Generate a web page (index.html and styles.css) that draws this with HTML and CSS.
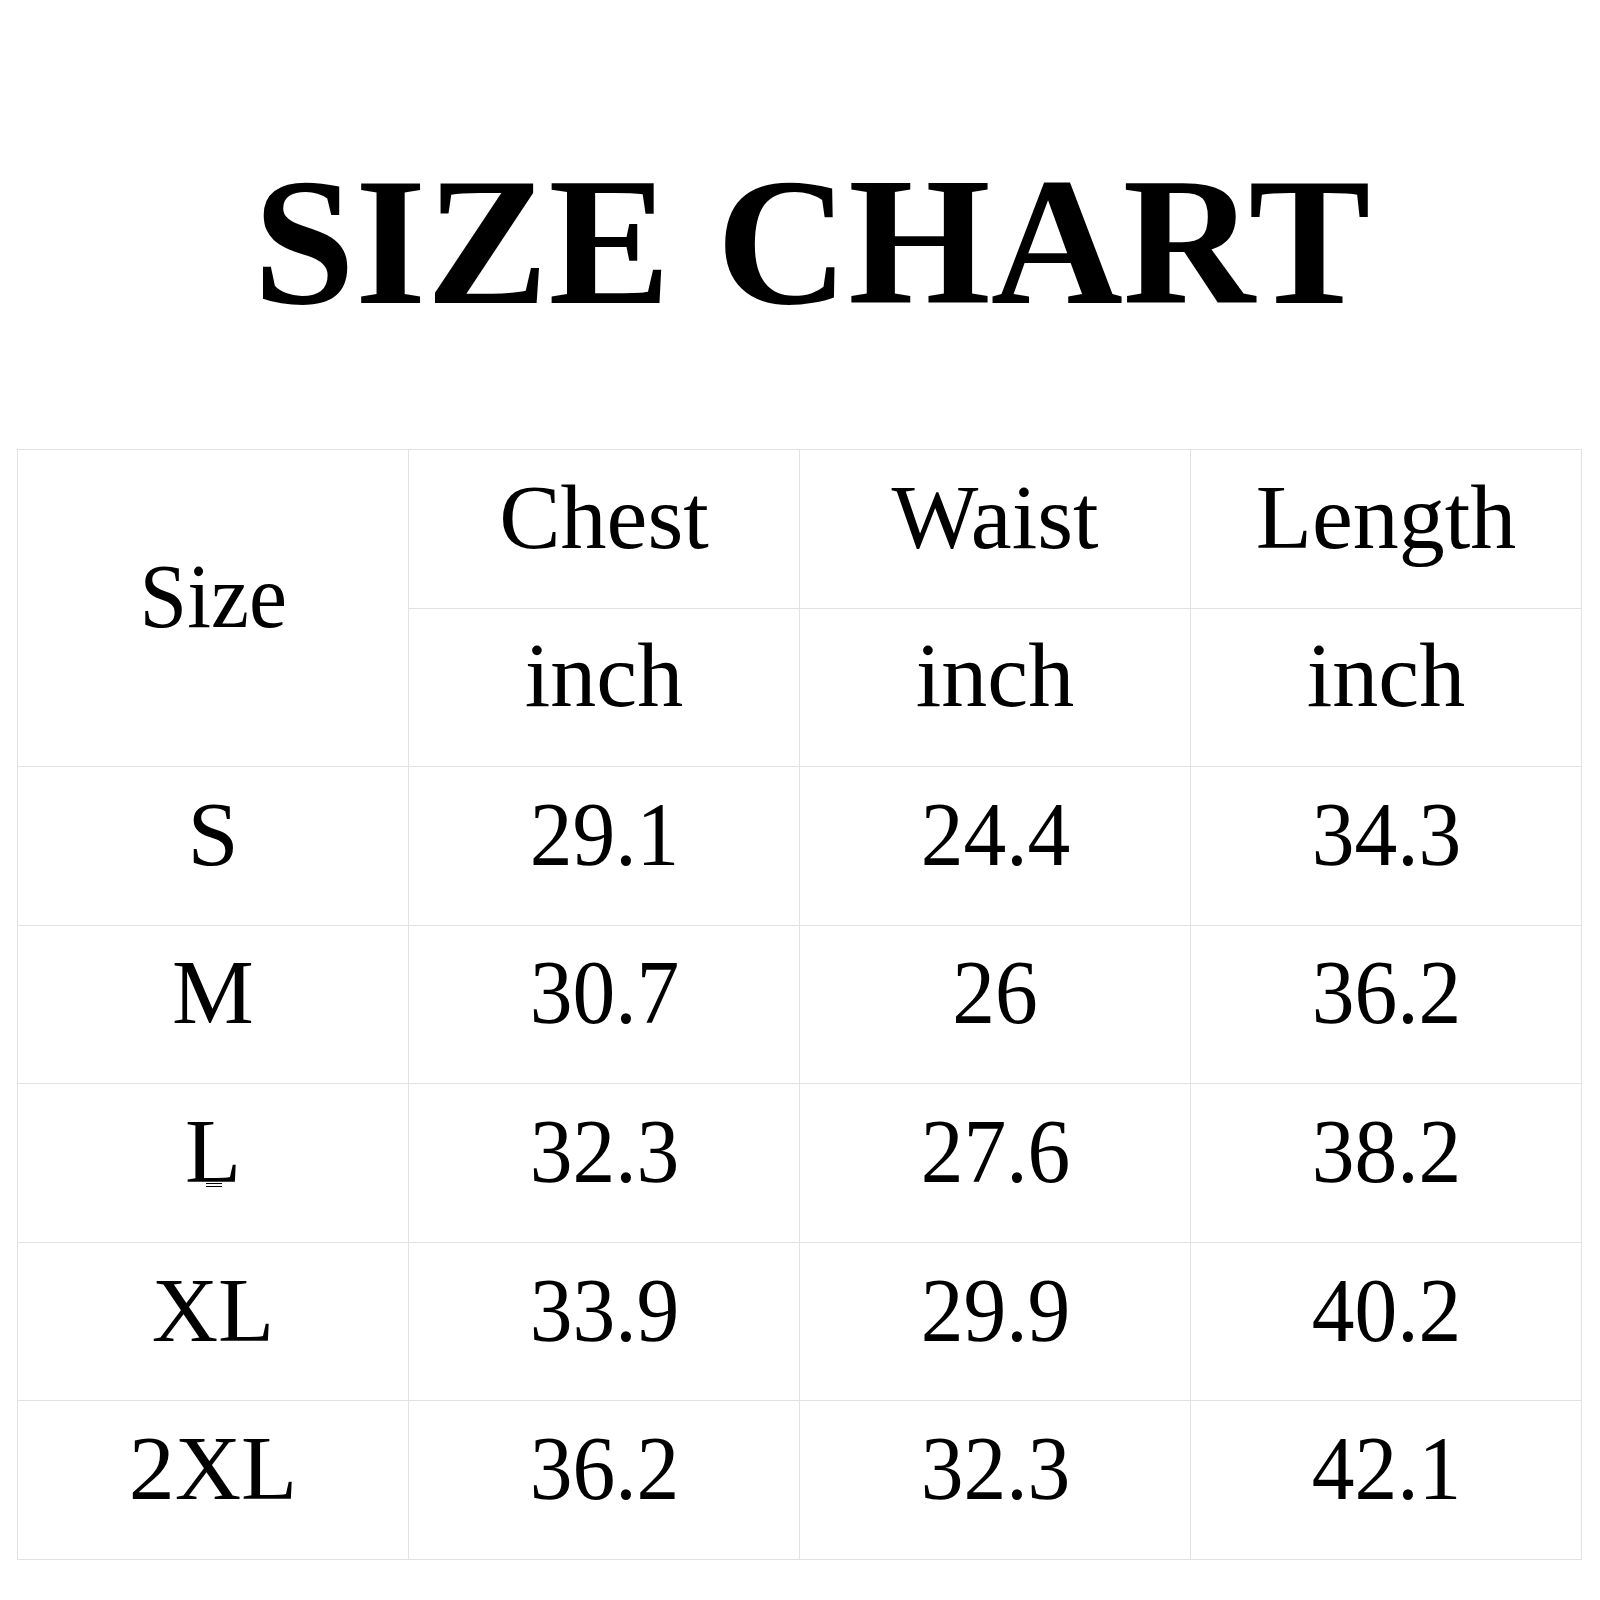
FILE: index.html
```html
<!DOCTYPE html>
<html lang="en">
<head>
<meta charset="utf-8">
<title>Size Chart</title>
<link rel="stylesheet" href="styles.css">
</head>
<body>
<main class="page">
  <h1 class="title">SIZE CHART</h1>
  <div class="chart">
    <div class="cell size-head"><span class="narrow">Size</span></div>
    <div class="cell">Chest</div>
    <div class="cell">Waist</div>
    <div class="cell">Length</div>
    <div class="cell">inch</div>
    <div class="cell">inch</div>
    <div class="cell">inch</div>

    <div class="cell">S</div>
    <div class="cell"><span class="narrow">29.1</span></div>
    <div class="cell"><span class="narrow">24.4</span></div>
    <div class="cell"><span class="narrow">34.3</span></div>

    <div class="cell">M</div>
    <div class="cell"><span class="narrow">30.7</span></div>
    <div class="cell"><span class="narrow">26</span></div>
    <div class="cell"><span class="narrow">36.2</span></div>

    <div class="cell"><span class="mark">L<span class="glitch"></span></span></div>
    <div class="cell"><span class="narrow">32.3</span></div>
    <div class="cell"><span class="narrow">27.6</span></div>
    <div class="cell"><span class="narrow">38.2</span></div>

    <div class="cell">XL</div>
    <div class="cell"><span class="narrow">33.9</span></div>
    <div class="cell"><span class="narrow">29.9</span></div>
    <div class="cell"><span class="narrow">40.2</span></div>

    <div class="cell">2XL</div>
    <div class="cell"><span class="narrow">36.2</span></div>
    <div class="cell"><span class="narrow">32.3</span></div>
    <div class="cell"><span class="narrow">42.1</span></div>
  </div>
</main>
</body>
</html>
```

FILE: styles.css
```css
html, body {
  margin: 0;
  padding: 0;
  background: #ffffff;
}

.page {
  width: 1600px;
  height: 1600px;
  padding-top: 150px;
  box-sizing: border-box;
  font-family: "Liberation Serif", "Times New Roman", serif;
  color: #000000;
}

.title {
  margin: 0 0 115px 0;
  padding-left: 24px;
  font-size: 183px;
  line-height: 184px;
  font-weight: bold;
  text-align: center;
}

.chart {
  margin-left: 17px;
  width: 1565px;
  height: 1111px;
  box-sizing: border-box;
  padding: 1px;
  display: grid;
  grid-template-columns: repeat(4, 1fr);
  grid-template-rows: repeat(7, 1fr);
  gap: 1px;
  background: #e2e2e2;
}

.cell {
  background: #ffffff;
  display: flex;
  align-items: center;
  justify-content: center;
  font-size: 92px;
  line-height: normal;
  padding-bottom: 24px;
  box-sizing: border-box;
}

.size-head {
  grid-row: span 2;
}

.narrow {
  display: inline-block;
  transform: scaleX(0.93);
}

.mark {
  position: relative;
}

.glitch {
  position: absolute;
  left: 21px;
  bottom: 17px;
  width: 16px;
  height: 5px;
  border-top: 1px solid #000;
  border-bottom: 1px solid #000;
  background: linear-gradient(to bottom, transparent 2px, #000 2px, #000 3px, transparent 3px);
}
```
